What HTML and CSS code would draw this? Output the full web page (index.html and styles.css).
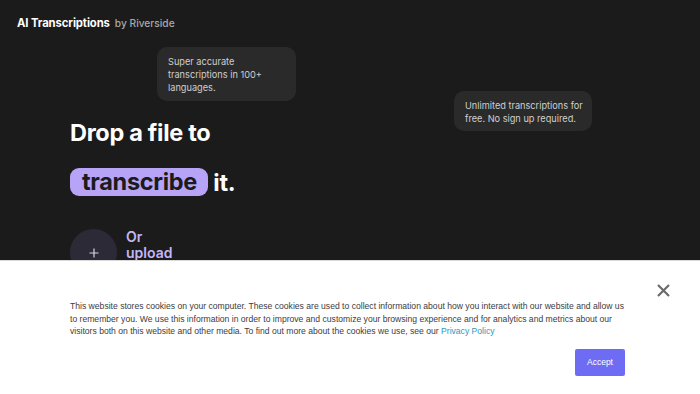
FILE: index.html
```html
<!DOCTYPE html>
<html>
<head>
<meta charset="utf-8">
<link rel="stylesheet" href="styles.css">
</head>
<body>
<div class="page">
  <header class="topbar">
    <span class="brand">AI Transcriptions</span>
    <span class="by">by Riverside</span>
  </header>
  <div class="bubble bubble-one">Super accurate transcriptions in 100+ languages.</div>
  <div class="bubble bubble-two">Unlimited transcriptions for free. No sign up required.</div>
  <main class="hero">
    <h1 class="title">
      <span class="line">Drop a file to</span>
      <span class="line"><span class="pill">transcribe</span> it.</span>
    </h1>
    <div class="upload">
      <div class="plus-circle">
        <svg width="10" height="10" viewBox="0 0 10 10"><path d="M5 0.5v9M0.5 5h9" stroke="#d6d2e6" stroke-width="1.2" fill="none"/></svg>
      </div>
      <div class="upload-text">Or<br>upload</div>
    </div>
  </main>
</div>
<div class="cookie">
  <button class="close" aria-label="Close">
    <svg width="13" height="13" viewBox="0 0 13 13"><path d="M1 1l11 11M12 1L1 12" stroke="#6b6b6b" stroke-width="2.2" fill="none"/></svg>
  </button>
  <p class="cookie-text">This website stores cookies on your computer. These cookies are used to collect information about how you interact with our website and allow us<br>to remember you. We use this information in order to improve and customize your browsing experience and for analytics and metrics about our<br>visitors both on this website and other media. To find out more about the cookies we use, see our <a href="#" class="policy">Privacy Policy</a></p>
  <div class="actions">
    <button class="accept">Accept</button>
  </div>
</div>
</body>
</html>
```

FILE: styles.css
```css
* { box-sizing: border-box; }
html, body {
  margin: 0;
  padding: 0;
  width: 700px;
  height: 394px;
  overflow: hidden;
  background: #1c1b1c;
  font-family: Inter, "Noto Sans", sans-serif;
}
.page {
  position: relative;
  height: 394px;
}
.topbar {
  display: flex;
  align-items: baseline;
  gap: 5px;
  padding: 16px 0 0 17px;
  height: 40px;
}
.brand {
  color: #ffffff;
  font-weight: 700;
  font-size: 11.3px;
  letter-spacing: -0.1px;
}
.by {
  color: #a9a9a9;
  font-size: 10.2px;
  font-weight: 500;
}
.bubble {
  position: absolute;
  background: #2b2a2b;
  color: #cfcfcf;
  border-radius: 10px;
  font-size: 9.2px;
  line-height: 13px;
  padding: 8px 6px 8px 11px;
}
.bubble-one {
  left: 157px;
  top: 47px;
  width: 139px;
  height: 54px;
  padding-right: 10px;
}
.bubble-two {
  left: 454px;
  top: 91px;
  width: 138px;
  height: 40px;
}
.hero {
  padding: 68px 0 0 70px;
}
.title {
  margin: 0;
  color: #ffffff;
  font-size: 23.5px;
  font-weight: 700;
  letter-spacing: -0.3px;
  line-height: 50px;
}
.line {
  display: block;
}
.pill {
  display: inline-block;
  background: #b7a4f7;
  color: #1c1b1c;
  border-radius: 9px;
  padding: 0 11px 0 12px;
  height: 28px;
  line-height: 28px;
  vertical-align: 1px;
}
.upload {
  display: flex;
  align-items: flex-start;
  gap: 9px;
  margin-top: 21px;
}
.plus-circle {
  width: 47px;
  height: 47px;
  border-radius: 50%;
  background: #2d2a38;
  display: flex;
  align-items: center;
  justify-content: center;
}
.upload-text {
  color: #c3b6f7;
  font-size: 14px;
  font-weight: 600;
  line-height: 16px;
}
.cookie {
  position: absolute;
  left: 0;
  top: 260px;
  width: 700px;
  height: 134px;
  background: #ffffff;
  border-top: 1px solid #d9d9d9;
  padding: 39px 70px 0 70px;
  font-family: "Liberation Sans", Arial, sans-serif;
}
.close {
  position: absolute;
  right: 29px;
  top: 22px;
  width: 15px;
  height: 15px;
  padding: 0;
  border: 0;
  background: none;
  display: flex;
  align-items: center;
  justify-content: center;
}
.cookie-text {
  margin: 0;
  color: #3c3c3c;
  font-size: 8.6px;
  line-height: 12.5px;
  white-space: nowrap;
}
.policy {
  color: #2a9ab9;
  text-decoration: none;
}
.actions {
  display: flex;
  justify-content: flex-end;
  padding-right: 5px;
  margin-top: 11px;
}
.accept {
  width: 50px;
  height: 27px;
  background: #6e6cf3;
  color: #ffffff;
  border: 0;
  border-radius: 2px;
  font-family: "Liberation Sans", Arial, sans-serif;
  font-size: 8.5px;
  padding: 0;
}
```
